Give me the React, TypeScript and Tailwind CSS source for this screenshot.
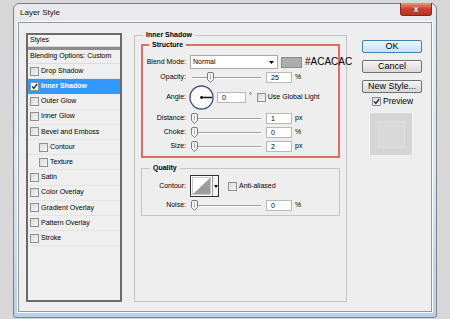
import React from "react";

const styles = [
  { label: "Drop Shadow" },
  { label: "Inner Shadow", on: true },
  { label: "Outer Glow" },
  { label: "Inner Glow" },
  { label: "Bevel and Emboss" },
  { label: "Contour", sub: true },
  { label: "Texture", sub: true },
  { label: "Satin" },
  { label: "Color Overlay" },
  { label: "Gradient Overlay" },
  { label: "Pattern Overlay" },
  { label: "Stroke" },
];

function Check({ on = false, className = "" }: { on?: boolean; className?: string }) {
  return (
    <span
      className={`flex h-[9px] w-[9px] shrink-0 items-center justify-center border border-[#8e8f8f] bg-gradient-to-br from-[#d9d9d9] to-[#f7f7f7] ${className}`}
    >
      {on && (
        <svg width="7" height="7" viewBox="0 0 7 7">
          <path d="M1 3.4 L2.8 5.4 L6.2 1" fill="none" stroke="#1d2b4c" strokeWidth="1.4" />
        </svg>
      )}
    </span>
  );
}

function Slider({ value, max = 100 }: { value: number; max?: number }) {
  const left = 1 + (value / max) * 62;
  return (
    <div className="relative h-[11px] w-[73px] shrink-0">
      <div className="absolute left-[2px] right-[2px] top-[5px] h-[2px] border-t border-b border-t-[#a2a2a2] border-b-white" />
      <svg className="absolute top-0" style={{ left }} width="7" height="11" viewBox="0 0 7 11">
        <path
          d="M0.5 2 Q0.5 0.5 2 0.5 H5 Q6.5 0.5 6.5 2 V7.5 L3.5 10.5 L0.5 7.5 Z"
          fill="#f4f4f4"
          stroke="#7a7a7a"
        />
        <path d="M3.5 2.5 V7.5" stroke="#b0b0b0" />
      </svg>
    </div>
  );
}

function Field({ value, className = "w-[26px]" }: { value: string; className?: string }) {
  return (
    <div
      className={`flex h-[11px] shrink-0 items-center border border-[#b8b8b8] bg-white pl-[4px] text-[7px] leading-none ${className}`}
    >
      {value}
    </div>
  );
}

function SliderRow({
  label,
  value,
  unit,
  max = 100,
  labelW = "w-[43px]",
}: {
  label: string;
  value: number;
  unit: string;
  max?: number;
  labelW?: string;
}) {
  return (
    <div className="flex h-[11px] items-center">
      <span className={`mr-[4px] shrink-0 text-right ${labelW}`}>{label}</span>
      <Slider value={value} max={max} />
      <Field value={String(value)} className="ml-[3px] w-[26px]" />
      <span className="ml-[3px]">{unit}</span>
    </div>
  );
}

function Button({ children, def = false }: { children: React.ReactNode; def?: boolean }) {
  return (
    <button
      className={`flex h-[13px] w-[60px] items-center justify-center rounded-[2px] border text-[9px] leading-none text-black ${
        def
          ? "border-[#3c7fb1] bg-gradient-to-b from-[#eaf6fd] to-[#c6e3f6]"
          : "border-[#707070] bg-gradient-to-b from-[#f4f4f4] to-[#d9d9d9]"
      }`}
    >
      {children}
    </button>
  );
}

export default function App() {
  return (
    <div className="h-[319px] w-[450px] overflow-hidden bg-[#d7d7d7] pl-[13px] pt-[3px] font-['Liberation_Sans',Arial,sans-serif] text-[7px] text-black">
      <div className="flex h-[315px] w-[424px] flex-col rounded-t-[6px] rounded-b-[3px] border border-[#77838f] bg-gradient-to-b from-[#e8eaed] via-[#e2e7ed] to-[#b9d0e8] px-[4px] pb-[5px]">
        {/* title bar */}
        <div className="flex h-[18px] items-start justify-between">
          <span className="ml-[2px] self-center text-[8px] leading-none text-[#111]">Layer Style</span>
          <div className="-mt-[1px] flex h-[13px] w-[32px] items-center justify-center rounded-b-[3px] border border-t-0 border-[#7b2a22] bg-gradient-to-b from-[#e8907f] via-[#cc3f2c] to-[#b8321f]">
            <span className="text-[9px] font-bold leading-none text-white [text-shadow:0_0_1px_#3a0e0a]">x</span>
          </div>
        </div>

        {/* client area */}
        <div className="flex flex-1 items-start border border-[#8e99a6] bg-[#efeeee] pl-[7px] pr-[7px] pt-[8px] shadow-[0_0_0_1px_#ffffff]">
          {/* styles list */}
          <div className="mt-[2px] flex h-[269px] w-[96px] shrink-0 flex-col border-2 border-[#6b6b6b] bg-[#efefef]">
            <div className="flex h-[12px] items-center border-b border-[#d2d2d2] bg-[#f6f6f6] pl-[2px]">Styles</div>
            <div className="h-[3px] bg-[#8d8d8d]" />
            <div className="flex h-[14px] items-center border-b border-[#dcdcdc] pl-[2px]">Blending Options: Custom</div>
            {styles.map((s) => (
              <div
                key={s.label}
                className={`flex h-[15.2px] items-center gap-[2px] border-b ${
                  s.on ? "border-[#3399ff] bg-[#3399ff] font-bold text-white" : "border-[#e4e4e4]"
                } ${s.sub ? "pl-[11px]" : "pl-[2px]"}`}
              >
                <Check on={s.on} className={s.on ? "bg-white from-white to-white" : ""} />
                <span>{s.label}</span>
              </div>
            ))}
          </div>

          {/* inner shadow group */}
          <fieldset className="ml-[12px] h-[271px] w-[213px] min-w-0 shrink-0 border border-[#c4c4c4]">
            <legend className="ml-[8px] px-[3px] text-[7px] font-bold leading-[8px]">Inner Shadow</legend>
            <div className="px-[6px] pt-[2px]">
              <fieldset className="min-w-0 border-2 border-[#e46a6a]">
                <legend className="ml-[6px] px-[3px] text-[7px] font-bold leading-[8px]">Structure</legend>
                <div className="flex flex-col pb-[4px] pt-[6px]">
                  <div className="flex h-[14px] items-center">
                    <span className="mr-[4px] w-[43px] shrink-0 text-right">Blend Mode:</span>
                    <div className="flex h-[14px] w-[88px] shrink-0 items-center justify-between border border-[#a8a8a8] bg-white pl-[2px] pr-[3px]">
                      <span>Normal</span>
                      <svg width="5" height="3" viewBox="0 0 5 3">
                        <path d="M0 0H5L2.5 3Z" fill="#000" />
                      </svg>
                    </div>
                    <div className="ml-[3px] h-[11px] w-[21px] shrink-0 border border-[#8a8a8a] bg-[#acacac]" />
                    <span className="ml-[3px] whitespace-nowrap text-[10px] leading-none">#ACACAC</span>
                  </div>

                  <div className="mt-[3px]">
                    <SliderRow label="Opacity:" value={25} unit="%" />
                  </div>

                  <div className="mt-[2px] flex h-[24px] items-center">
                    <span className="mr-[3px] w-[43px] shrink-0 text-right">Angle:</span>
                    <svg width="25" height="25" viewBox="0 0 25 25" className="shrink-0">
                      <circle cx="12.5" cy="12.5" r="11.5" fill="#fbfbfb" stroke="#45537a" strokeWidth="1.4" />
                      <path d="M12.5 12.5 H23" stroke="#111" strokeWidth="1.5" />
                      <circle cx="12.5" cy="12.5" r="1.4" fill="#111" />
                    </svg>
                    <Field value="0" className="ml-[3px] w-[29px]" />
                    <span className="ml-[3px] self-start pt-[6px]">°</span>
                    <Check className="ml-[5px]" />
                    <span className="ml-[2px]">Use Global Light</span>
                  </div>

                  <div className="mt-[4px] flex flex-col gap-[3px]">
                    <SliderRow label="Distance:" value={1} max={250} unit="px" />
                    <SliderRow label="Choke:" value={0} unit="%" />
                    <SliderRow label="Size:" value={2} max={250} unit="px" />
                  </div>
                </div>
              </fieldset>

              <fieldset className="mt-[6px] min-w-0 border border-[#c4c4c4]">
                <legend className="ml-[8px] px-[3px] text-[7px] font-bold leading-[8px]">Quality</legend>
                <div className="flex flex-col pb-[4px] pt-[3px]">
                  <div className="flex h-[22px] items-center">
                    <span className="mr-[4px] w-[44px] shrink-0 text-right">Contour:</span>
                    <div className="flex h-[22px] w-[29px] shrink-0 border border-[#333]">
                      <svg width="21" height="20" viewBox="0 0 21 20" className="shrink-0">
                        <rect x="0" y="0" width="21" height="20" fill="#fff" />
                        <rect x="1.5" y="1.5" width="18" height="17" fill="#fff" stroke="#c8c8c8" />
                        <path d="M2 18 L19 2 V18 Z" fill="#9d9d9d" />
                      </svg>
                      <div className="flex flex-1 items-center justify-center border-l border-[#999] bg-[#f4f4f4]">
                        <svg width="4" height="3" viewBox="0 0 4 3">
                          <path d="M0 0H4L2 3Z" fill="#000" />
                        </svg>
                      </div>
                    </div>
                    <Check className="ml-[9px]" />
                    <span className="ml-[2px]">Anti-aliased</span>
                  </div>
                  <div className="mt-[3px]">
                    <SliderRow label="Noise:" value={0} unit="%" labelW="w-[44px]" />
                  </div>
                </div>
              </fieldset>
            </div>
          </fieldset>

          {/* buttons */}
          <div className="ml-[15px] mt-[9px] flex w-[60px] shrink-0 flex-col">
            <Button def>OK</Button>
            <div className="mt-[7px]">
              <Button>Cancel</Button>
            </div>
            <div className="mt-[7px]">
              <Button>New Style...</Button>
            </div>
            <div className="ml-[10px] mt-[4px] flex h-[9px] items-center gap-[2px]">
              <Check on />
              <span className="text-[8.5px] leading-none">Preview</span>
            </div>
            <div className="ml-[7px] mt-[6px] flex h-[44px] w-[44px] items-center justify-center border border-[#f4f4f4] bg-[#d5d5d5]">
              <div className="h-[27px] w-[27px] border border-[#e0e0e0] bg-[#d9d9d9]" />
            </div>
          </div>
        </div>
      </div>
    </div>
  );
}
